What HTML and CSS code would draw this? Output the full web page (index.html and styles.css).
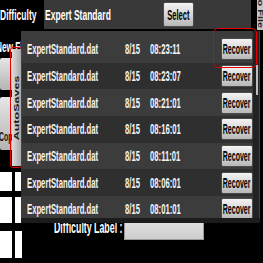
FILE: index.html
```html
<!DOCTYPE html>
<html>
<head>
<meta charset="utf-8">
<link rel="stylesheet" href="styles.css">
</head>
<body>
<div class="screen">
  <div class="topbar">
    <div class="tlabel"><span class="sq">Difficulty</span></div>
    <div class="diffbox">
      <div class="dname"><span class="sq">Expert Standard</span></div>
      <div class="btn select"><span class="sq">Select</span></div>
    </div>
    <div class="filetab"><span class="vt-file">to File</span></div>
  </div>
  <div class="lower">
    <div class="side">
      <div class="newfile"><span class="sq">New File</span></div>
      <div class="gbtn g1"></div>
      <div class="gbtn g2"><span class="sq">Copy</span></div>
      <div class="wrow w1"><i></i><i></i></div>
      <div class="wrow w2"><i></i><i></i></div>
      <div class="wrow w3"><i></i><i></i></div>
    </div>
    <div class="mainarea">
      <div class="labelrow">
        <div class="dlabel"><span class="sq">Difficulty Label :</span></div>
        <div class="dinput"></div>
      </div>
    </div>
  </div>

  <div class="panel">
    <div class="list">
      <div class="row"><div class="name"><span class="sq">ExpertStandard.dat</span></div><div class="date"><span class="sq">8/15</span></div><div class="time"><span class="sq">08:23:11</span></div><div class="btn recover"><span class="sq">Recover</span></div></div>
      <div class="row"><div class="name"><span class="sq">ExpertStandard.dat</span></div><div class="date"><span class="sq">8/15</span></div><div class="time"><span class="sq">08:23:07</span></div><div class="btn recover"><span class="sq">Recover</span></div></div>
      <div class="row"><div class="name"><span class="sq">ExpertStandard.dat</span></div><div class="date"><span class="sq">8/15</span></div><div class="time"><span class="sq">08:21:01</span></div><div class="btn recover"><span class="sq">Recover</span></div></div>
      <div class="row"><div class="name"><span class="sq">ExpertStandard.dat</span></div><div class="date"><span class="sq">8/15</span></div><div class="time"><span class="sq">08:16:01</span></div><div class="btn recover"><span class="sq">Recover</span></div></div>
      <div class="row"><div class="name"><span class="sq">ExpertStandard.dat</span></div><div class="date"><span class="sq">8/15</span></div><div class="time"><span class="sq">08:11:01</span></div><div class="btn recover"><span class="sq">Recover</span></div></div>
      <div class="row"><div class="name"><span class="sq">ExpertStandard.dat</span></div><div class="date"><span class="sq">8/15</span></div><div class="time"><span class="sq">08:06:01</span></div><div class="btn recover"><span class="sq">Recover</span></div></div>
      <div class="row"><div class="name"><span class="sq">ExpertStandard.dat</span></div><div class="date"><span class="sq">8/15</span></div><div class="time"><span class="sq">08:01:01</span></div><div class="btn recover"><span class="sq">Recover</span></div></div>
    </div>
    <div class="scroll"><div class="thumb"></div></div>
  </div>

  <div class="autotab"><span class="vt">AutoSaves</span></div>
  <div class="hl hl-tab"></div>
  <div class="hl hl-rec"></div>
</div>
</body>
</html>
```
FILE: styles.css
```css
* { box-sizing: border-box; margin: 0; padding: 0; }
html, body { width: 263px; height: 263px; overflow: hidden; background: #000; }
body { font-family: "Liberation Sans", Arial, sans-serif; font-weight: bold; color: #fff; }

.screen { position: relative; width: 263px; height: 263px; overflow: hidden; background: #000; }

.sq { display: inline-block; white-space: nowrap; transform: scaleX(0.55); transform-origin: 0 50%; }

/* top bar */
.topbar { display: flex; height: 29px; }
.tlabel { width: 44px; flex: none; display: flex; align-items: center; font-size: 15.5px; white-space: nowrap; }
.diffbox { width: 207px; flex: none; background: #393939; display: flex; align-items: center; }
.dname { width: 119px; flex: none; font-size: 15.5px; padding-left: 1px; white-space: nowrap; }

.btn { display: flex; align-items: center; justify-content: center; flex: none;
  background: linear-gradient(#f4f4f4, #b8b8b8); border: 1px solid #4c4c4c; border-radius: 2px; color: #000; }
.btn .sq { transform-origin: 50% 50%; }
.select { width: 31px; height: 25px; font-size: 14.5px; }
.select .sq { transform: scaleX(0.52); }

.filetab { margin-left: 6px; width: 6px; height: 30px; background: #c6c6c6; overflow: hidden;
  display: flex; justify-content: center; align-items: flex-start; flex: none; }
.vt-file { display: inline-block; white-space: nowrap; font-size: 11px; color: #222;
  margin-top: 6px; transform: scaleX(0.6) rotate(90deg); }

/* background content */
.lower { display: flex; height: 234px; }
.side { width: 22px; flex: none; display: flex; flex-direction: column; }
.newfile { margin-top: 9px; height: 16px; display: flex; align-items: center; margin-left: -4.5px; font-size: 15px; }
.gbtn { width: 22px; flex: none; background: linear-gradient(#e6e6e6, #b4b4b4); border-radius: 2px; }
.g1 { margin-top: 4px; height: 32px; }
.g2 { margin-top: 7px; height: 53px; display: flex; align-items: flex-end; padding-bottom: 6px; color: #111; font-size: 12.5px; }
.g2 .sq { margin-left: -1.5px; }
.wrow { display: flex; gap: 3px; flex: none; }
.wrow i { display: block; background: #fff; }
.wrow i:first-child { width: 12px; }
.wrow i:last-child { width: 7px; }
.w1 { margin-top: 22px; height: 19px; }
.w2 { margin-top: 6px; height: 26px; }
.w3 { margin-top: 8px; height: 27px; }

.mainarea { flex: 1; padding-top: 188px; padding-left: 32px; }
.labelrow { display: flex; align-items: center; height: 21px; }
.dlabel { width: 70px; flex: none; font-size: 16px; }
.dinput { width: 80px; height: 18px; margin-top: 6px; background: linear-gradient(#dedede, #cdcdcd); border: 1px solid #9a9a9a; }

/* autosave popup */
.panel { position: absolute; left: 21px; top: 31px; width: 239px; height: 192px; background: #1c1c1c;
  display: flex; align-items: flex-start; z-index: 2; }
.list { width: 232px; height: 187px; overflow: hidden; background: #3c3c3c; padding-top: 5px; flex: none; }
.row { height: 26.67px; display: flex; align-items: center; font-size: 14px; color: #f4f4f4; }
.row:nth-child(even) { background: #2f2f2f; }
.name { width: 104px; padding-left: 6px; flex: none; }
.date { width: 25px; flex: none; }
.time { flex: 1; }
.recover { width: 32px; height: 22px; font-size: 14px; }
.recover .sq { transform: scaleX(0.5); }
.scroll { width: 7px; height: 187px; background: #222; border-right: 1px solid #444; padding: 34px 0 0 3px; flex: none; }
.thumb { width: 2px; height: 30px; background: #bdbdbd; }

.autotab { position: absolute; left: 12px; top: 49px; width: 9px; height: 117px; z-index: 3;
  background: linear-gradient(to right, #dcdcdc, #a8a8a8); display: flex; align-items: center; justify-content: center; }
.vt { display: inline-block; white-space: nowrap; font-size: 12.5px; color: #1a1a1a;
  transform: scaleX(0.6) rotate(-90deg); }

.hl { position: absolute; border: 1.5px solid #e80000; z-index: 4; }
.hl-tab { left: 10px; top: 47px; width: 12px; height: 121px; border-radius: 3px; }
.hl-rec { left: 213px; top: 28px; width: 44px; height: 40px; border-radius: 5px; }
```
